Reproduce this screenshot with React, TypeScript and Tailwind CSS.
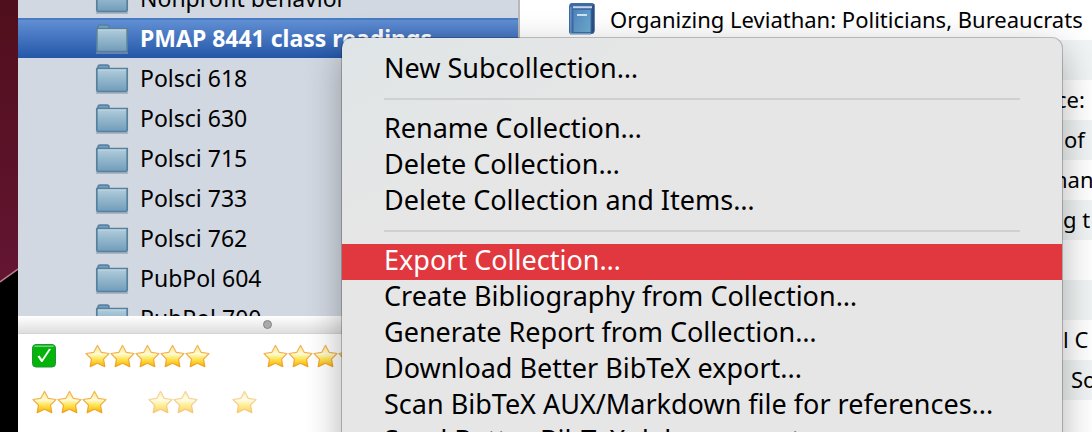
import { useState } from "react";

type Collection = { name: string; selected?: boolean };
type Item = { title: string; indent: string; icon?: boolean };
type Tag = { label: string; stars: number; className: string };

const COLLECTIONS: Collection[] = [
    { name: "Nonprofit behavior" },
    { name: "PMAP 8441 class readings", selected: true },
    { name: "Polsci 618" },
    { name: "Polsci 630" },
    { name: "Polsci 715" },
    { name: "Polsci 733" },
    { name: "Polsci 762" },
    { name: "PubPol 604" },
    { name: "PubPol 700" },
];

const ITEMS: Item[] = [
    { title: "Organizing Leviathan: Politicians, Bureaucrats", indent: "pl-12", icon: true },
    { title: "", indent: "" },
    { title: "ce:", indent: "pl-[536px]" },
    { title: "of", indent: "pl-[544px]" },
    { title: "nan", indent: "pl-[534px]" },
    { title: "g t", indent: "pl-[543px]" },
    { title: "", indent: "" },
    { title: "", indent: "" },
    { title: "l C", indent: "pl-[543px]" },
    { title: "So", indent: "pl-[551px]" },
    { title: "", indent: "" },
];

const TAG_ROWS: Tag[][] = [
    [
        { label: "Five stars", stars: 5, className: "ml-[29px]" },
        { label: "Four stars", stars: 4, className: "ml-[53px]" },
    ],
    [
        { label: "Three stars", stars: 3, className: "" },
        { label: "Two stars", stars: 2, className: "ml-[41px] opacity-60" },
        { label: "One star", stars: 1, className: "ml-[34px] opacity-60" },
    ],
];

const MENU_GROUPS = [
    ["New Subcollection…"],
    ["Rename Collection…", "Delete Collection…", "Delete Collection and Items…"],
    [
        "Export Collection…",
        "Create Bibliography from Collection…",
        "Generate Report from Collection…",
        "Download Better BibTeX export...",
        "Scan BibTeX AUX/Markdown file for references...",
        "Send Better BibTeX debug report...",
    ],
];

function FolderIcon() {
    return (
        <svg width="34" height="32" viewBox="0 0 34 32" aria-hidden="true" className="shrink-0">
            <path d="M1 31h32" stroke="#8e9eae" strokeOpacity=".6" strokeWidth="2" />
            <path d="M3 7V5q0-2 2-2h7q2 0 2 2v2z" fill="#6f9fc0" stroke="#587f9c" strokeWidth="1.500" />
            <path d="M1.800 6.500h30.400V28q0 1.500-1.500 1.500H3.300q-1.500 0-1.500-1.500z" fill="url(#folder)" stroke="#56809d" strokeWidth="1.700" />
            <path d="M3 8h28" stroke="#bed6e2" />
        </svg>
    );
}

function BookIcon() {
    return (
        <svg width="28" height="34" viewBox="0 0 28 34" aria-hidden="true" className="shrink-0">
            <path d="M4 1h20q2.500 0 2.500 3v25q0 3-3 3H3q-2 0-2-2V5q0-4 3-4z" fill="#3f6ba5" />
            <path d="M23.500 4l3-2v27l-3 3z" fill="#2c4f84" />
            <path d="M5 5.200H24" stroke="#c3d6ea" strokeWidth="2" />
            <rect x="5.500" y="8" width="17" height="22" fill="url(#book)" />
            <path d="M2.800 5v26" stroke="#6593c6" strokeWidth="1.500" />
            <path d="M9 13h10" stroke="#c8e2ef" strokeWidth="2" />
            <path d="M2 32h21" stroke="#8fb4d0" strokeWidth="1.500" />
        </svg>
    );
}

function Star() {
    return (
        <svg width="25" height="24" viewBox="0 0 25 24" aria-hidden="true" className="shrink-0">
            <path
                d="M12.500 1.400l3.700 6.900 7.800 1.200-5.500 5.600 1.300 7.500-7.300-3.300-7.300 3.300 1.300-7.500L1 9.500l7.800-1.200z"
                fill="url(#star)"
                stroke="url(#star-edge)"
                strokeWidth="1.200"
                strokeLinejoin="round"
            />
        </svg>
    );
}

function CheckMark() {
    return (
        <svg width="24" height="24" viewBox="0 0 24 24" aria-hidden="true">
            <rect x=".5" y=".5" width="23" height="22.500" rx="3.500" fill="#05b40b" stroke="#23933a" />
            <path d="M3 2.200h18" stroke="#6bd578" strokeWidth="1.500" strokeLinecap="round" />
            <path d="M5.500 12.500l3.700 5.500h1.200L19 5l-2-.3-7 10.500-2.500-3.700z" fill="#fff" />
        </svg>
    );
}

// shared gradients for the icons
function IconDefs() {
    return (
        <svg width="0" height="0" className="absolute" aria-hidden="true">
            <defs>
                <linearGradient id="folder" x1="0" y1="0" x2="0" y2="1">
                    <stop offset="0" stopColor="#b3cddb" />
                    <stop offset="1" stopColor="#709cba" />
                </linearGradient>
                <linearGradient id="book" x1="0" y1="0" x2="1" y2="1">
                    <stop offset="0" stopColor="#4e83bd" />
                    <stop offset="1" stopColor="#70adcf" />
                </linearGradient>
                <linearGradient id="star" x1="0" y1="0" x2="0" y2="1">
                    <stop offset="0" stopColor="#ffe884" />
                    <stop offset=".4" stopColor="#fffbd6" />
                    <stop offset=".65" stopColor="#ffe452" />
                    <stop offset="1" stopColor="#fbb000" />
                </linearGradient>
                <linearGradient id="star-edge" x1="0" y1="0" x2="0" y2="1">
                    <stop offset="0" stopColor="#f2b866" />
                    <stop offset="1" stopColor="#eda321" />
                </linearGradient>
            </defs>
        </svg>
    );
}

function Sidebar() {
    return (
        <aside className="w-[500px] shrink-0 flex flex-col">
            <div className="h-[316px] shrink-0 overflow-hidden bg-[#d2d8e2]">
                <ul className="-mt-[22px]">
                    {COLLECTIONS.map((c) => (
                        <li key={c.name}>
                            <button
                                className={`flex h-10 w-full items-center gap-[11px] pl-[77px] text-left text-[23px] whitespace-nowrap ${
                                    c.selected
                                        ? "bg-linear-to-b from-[#6492d6] to-[#2456a8] font-bold text-white shadow-[inset_0_2px_0_#487bc4]"
                                        : "text-black"
                                }`}
                            >
                                <FolderIcon />
                                {c.name}
                            </button>
                        </li>
                    ))}
                </ul>
            </div>
            <div className="h-[18px] shrink-0 border-b border-[#d4d4d4] bg-linear-to-b from-white to-[#dedede] pl-[245px] pt-[4px]">
                <div className="size-[9px] rounded-full border border-[#858585] bg-[#aaa]" />
            </div>
            <div className="flex flex-1 flex-col gap-[22px] bg-white pl-[14px] pt-[10px]">
                {TAG_ROWS.map((row, i) => (
                    <div key={i} className="flex h-6 shrink-0">
                        {i === 0 && (
                            <button aria-label="Done">
                                <CheckMark />
                            </button>
                        )}
                        {row.map((tag) => (
                            <button key={tag.label} aria-label={tag.label} className={`flex ${tag.className}`}>
                                {Array.from({ length: tag.stars }, (_, n) => (
                                    <Star key={n} />
                                ))}
                            </button>
                        ))}
                    </div>
                ))}
            </div>
        </aside>
    );
}

function ContextMenu() {
    const [active, setActive] = useState("Export Collection…");

    return (
        <div
            role="menu"
            className="absolute left-[342px] top-[38px] w-[720px] rounded-[10px] bg-[#e6e6e6] bg-linear-to-br from-[#dfe5e7] to-[#e6e6e6] to-25% pt-[14px] pb-3 text-[27px] text-black shadow-[0_0_0_1px_rgba(0,0,0,0.22),0_12px_36px_rgba(0,0,0,0.32)]"
        >
            {MENU_GROUPS.map((group, i) => (
                <div key={i}>
                    {i > 0 && <div role="separator" className="mx-[42px] mt-[10px] mb-3 h-[2px] bg-[#d0d0d0]" />}
                    {group.map((label) => (
                        <button
                            key={label}
                            role="menuitem"
                            onMouseEnter={() => setActive(label)}
                            className={`flex h-9 w-full items-center px-[42px] pb-1 whitespace-nowrap ${
                                active === label ? "bg-[#e0383e] text-white" : ""
                            }`}
                        >
                            {label}
                        </button>
                    ))}
                </div>
            ))}
        </div>
    );
}

export default function App() {
    return (
        <div className="relative flex h-screen overflow-hidden bg-black font-['Noto_Sans','Open_Sans',sans-serif]">
            <IconDefs />
            <div className="w-[18px] shrink-0">
                <svg width="18" height="284" viewBox="0 0 18 284" aria-hidden="true">
                    <defs>
                        <linearGradient id="desktop" x1="0" y1="0" x2="0" y2="1">
                            <stop offset="0" stopColor="#500f1c" />
                            <stop offset="1" stopColor="#641532" />
                        </linearGradient>
                    </defs>
                    <path d="M0 0h18v269L0 282z" fill="url(#desktop)" />
                    <path d="M0 282l18-13" stroke="#b9848f" strokeWidth="1.500" />
                </svg>
            </div>
            <Sidebar />
            <main className="min-w-0 flex-1 overflow-hidden border-l-2 border-[#b8b8b8] bg-white">
                {ITEMS.map((item, i) => (
                    <div
                        key={i}
                        className={`flex h-10 items-center gap-[14px] pb-[2px] text-[22px] whitespace-nowrap text-black ${item.indent} ${
                            i % 2 ? "bg-[#f1f4f4]" : "bg-white"
                        }`}
                    >
                        {item.icon && <BookIcon />}
                        {item.title}
                    </div>
                ))}
            </main>
            <ContextMenu />
        </div>
    );
}
